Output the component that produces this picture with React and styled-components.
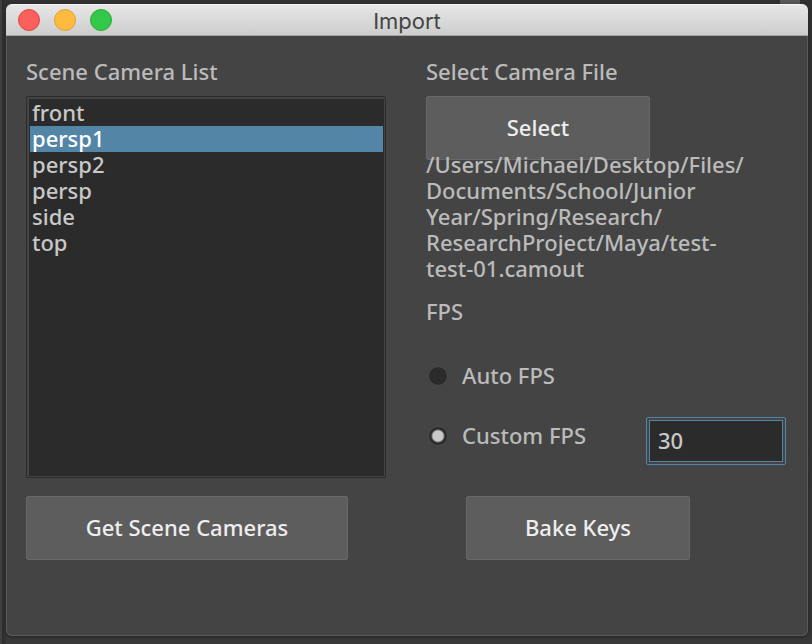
import React, { useState } from "react";
import styled, { createGlobalStyle } from "styled-components";

const GlobalStyle = createGlobalStyle`
  *, *::before, *::after { box-sizing: border-box; }
  body {
    margin: 0;
    background: #353535;
    font-family: "Noto Sans", "Open Sans", sans-serif;
    font-size: 22px;
    font-weight: 500;
    line-height: 26px;
    color: #bbbbbb;
  }
`;

const Desktop = styled.div`
  min-height: 100vh;
  padding: 4px 4px 8px 6px;
  display: flex;
  background:
    linear-gradient(#585858, #585858) right 12px top 0 / 20px 4px no-repeat,
    linear-gradient(90deg, #404040 2px, #2c2c2c 2px, #333333 6px, transparent 6px),
    linear-gradient(#303030, #343434 98%, #3b3b3b);
`;

const Window = styled.main`
  flex: 1;
  display: flex;
  flex-direction: column;
  background: #444444;
  border-radius: 6px;
  overflow: hidden;
  box-shadow: inset 0 0 0 1px #5a5a5a, 0 1px 3px #222222;
`;

const TitleBar = styled.header`
  height: 32px;
  padding: 0 12px;
  display: grid;
  grid-template-columns: 1fr auto 1fr;
  align-items: center;
  background: linear-gradient(#e6e6e6, #cdcdcd);
  border-top: 1px solid #f6f6f6;
  border-bottom: 1px solid #a4a4a4;
`;

const Lights = styled.div`
  display: flex;
  gap: 14px;
`;

const Light = styled.button`
  width: 22px;
  height: 22px;
  padding: 0;
  border: 1px solid ${(p) => p.$edge};
  border-radius: 50%;
  background: ${(p) => p.$fill};
`;

const Title = styled.h1`
  margin: 0;
  padding-top: 2px;
  font-family: Inter, Roboto, sans-serif;
  font-size: 22px;
  font-weight: 400;
  line-height: 26px;
  color: #444444;
`;

const Form = styled.form`
  flex: 1;
  padding: 20px 22px 76px 20px;
  display: grid;
  grid-template-columns: 1fr 1fr;
  grid-template-rows: auto auto;
  align-content: start;
  column-gap: 40px;
  row-gap: 18px;
`;

const Column = styled.section`
  display: flex;
  flex-direction: column;
  align-items: flex-start;
`;

const Label = styled.h2`
  margin: 0;
  padding: 2px 0 12px;
  font: inherit;
`;

const List = styled.ul`
  width: 100%;
  flex: 1;
  margin: 0;
  padding: 0;
  list-style: none;
  background: #2b2b2b;
  border: 4px double #2b2b2b;
  border-right-width: 3px;
  border-bottom-width: 3px;
  border-radius: 2px;
  background-clip: padding-box;
`;

const Item = styled.button`
  display: block;
  width: 100%;
  padding: 0 2px 2px;
  border: 0;
  font: inherit;
  line-height: 24px;
  text-align: left;
  color: ${(p) => (p.$selected ? "#ffffff" : "#c8c8c8")};
  background: ${(p) => (p.$selected ? "#5285a6" : "transparent")};
`;

const Button = styled.button`
  width: ${(p) => p.$width};
  height: 64px;
  margin-left: ${(p) => (p.$indent ? "40px" : "0")};
  padding: 0 0 2px;
  border: 1px solid #686868;
  border-radius: 2px;
  background: #5d5d5d;
  font: inherit;
  color: #eeeeee;
`;

const FilePath = styled.p`
  margin: -9px 0 0;
  white-space: nowrap;
`;

const FpsGroup = styled.fieldset`
  width: 100%;
  margin: 0;
  padding: 17px 0 7px;
  border: 0;
`;

const Legend = styled.div`
  padding-bottom: 27px;
`;

const FpsRow = styled.div`
  display: flex;
  align-items: center;
  justify-content: space-between;
  height: ${(p) => (p.$field ? "70px" : "50px")};
`;

const Option = styled.label`
  display: flex;
  align-items: center;
  gap: 14px;
`;

const OptionText = styled.span`
  padding-bottom: 2px;
`;

const Radio = styled.input`
  appearance: none;
  width: 20px;
  height: 20px;
  margin: 0 0 0 2px;
  border: 1px solid #4b4b4b;
  border-radius: 50%;
  background: #2b2b2b;
  &:checked {
    background: radial-gradient(circle, #c8c8c8 5px, #2b2b2b 7px);
  }
`;

const FpsInput = styled.input`
  width: 140px;
  height: 48px;
  margin-top: 10px;
  padding: 0 8px 2px;
  border: 4px double #5285a6;
  border-radius: 2px;
  outline: 0;
  background: #2b2b2b;
  background-clip: padding-box;
  font: inherit;
  color: #c8c8c8;
`;

const cameras = ["front", "persp1", "persp2", "persp", "side", "top"];

const pathLines = [
  "/Users/Michael/Desktop/Files/",
  "Documents/School/Junior",
  "Year/Spring/Research/",
  "ResearchProject/Maya/test-",
  "test-01.camout",
];

export default function App() {
  const [camera, setCamera] = useState("persp1");
  const [mode, setMode] = useState("custom");
  const [fps, setFps] = useState("30");

  return (
    <>
      <GlobalStyle />
      <Desktop>
        <Window>
          <TitleBar>
            <Lights>
              <Light aria-label="Close" $fill="#fc605c" $edge="#e0443e" />
              <Light aria-label="Minimize" $fill="#fdbc40" $edge="#de9f34" />
              <Light aria-label="Zoom" $fill="#34c84a" $edge="#27aa35" />
            </Lights>
            <Title>Import</Title>
          </TitleBar>
          <Form onSubmit={(e) => e.preventDefault()}>
            <Column>
              <Label id="cameras">Scene Camera List</Label>
              <List aria-labelledby="cameras">
                {cameras.map((name) => (
                  <li key={name}>
                    <Item
                      type="button"
                      aria-pressed={name === camera}
                      $selected={name === camera}
                      onClick={() => setCamera(name)}
                    >
                      {name}
                    </Item>
                  </li>
                ))}
              </List>
            </Column>
            <Column>
              <Label>Select Camera File</Label>
              <Button type="button" $width="224px">Select</Button>
              <FilePath>
                {pathLines.map((line) => (
                  <React.Fragment key={line}>
                    {line}
                    <br />
                  </React.Fragment>
                ))}
              </FilePath>
              <FpsGroup aria-labelledby="fps">
                <Legend id="fps">FPS</Legend>
                <FpsRow>
                  <Option>
                    <Radio type="radio" name="fps" checked={mode === "auto"} onChange={() => setMode("auto")} />
                    <OptionText>Auto FPS</OptionText>
                  </Option>
                </FpsRow>
                <FpsRow $field>
                  <Option>
                    <Radio type="radio" name="fps" checked={mode === "custom"} onChange={() => setMode("custom")} />
                    <OptionText>Custom FPS</OptionText>
                  </Option>
                  <FpsInput
                    type="text"
                    aria-label="Custom FPS value"
                    value={fps}
                    onChange={(e) => setFps(e.target.value)}
                  />
                </FpsRow>
              </FpsGroup>
            </Column>
            <Button type="button" $width="322px">Get Scene Cameras</Button>
            <Button type="button" $width="224px" $indent>Bake Keys</Button>
          </Form>
        </Window>
      </Desktop>
    </>
  );
}
